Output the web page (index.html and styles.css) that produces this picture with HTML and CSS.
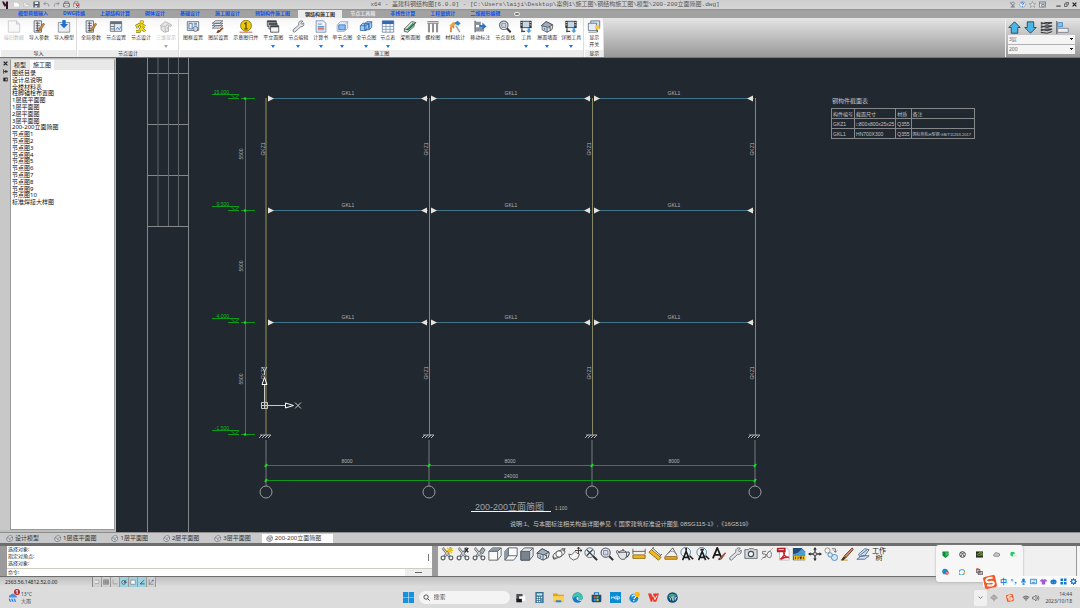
FILE: index.html
```html
<!DOCTYPE html>
<html lang="zh-CN">
<head>
<meta charset="utf-8">
<title>盖建科钢结构图</title>
<link rel="stylesheet" href="styles.css">
</head>
<body>
<svg class="sprite" aria-hidden="true">
  <symbol id="new" viewBox="0 0 16 16"><path d="M1 3h11l3 3v8H1z" fill="#fafafa" stroke="#b4b4b4"/><path d="M12 3v3h3" fill="none" stroke="#b4b4b4"/></symbol>
  <symbol id="open" viewBox="0 0 16 16"><path d="M1 13V4h5l1 2h5v2M1 13l4-5h10l-4 5z" fill="#eee" stroke="#b0b0b0"/></symbol>
  <symbol id="save" viewBox="0 0 16 16"><path d="M1 1h13l1 1v13H1z" fill="#4c5560"/><path d="M4 2h8v5H4zM4 10h8v5H4z" fill="#e6e9ee"/><path d="M9 11h2v3H9z" fill="#4c5560"/></symbol>
  <symbol id="undo" viewBox="0 0 16 16"><path d="M2 6h8q5 1 3 7M6 2L2 6l4 4" fill="none" stroke="#8b9097" stroke-width="2"/></symbol>
  <symbol id="redo" viewBox="0 0 16 16"><path d="M14 6H6q-5 1-3 7M10 2l4 4-4 4" fill="none" stroke="#8b9097" stroke-width="2"/></symbol>
  <symbol id="print" viewBox="0 0 16 16"><path d="M4 6V2h8v4M4 13H1V6h14v7h-3" fill="#eee" stroke="#444" stroke-width="1.5"/><path d="M4 10h8v4H4z" fill="#fff" stroke="#444"/></symbol>
  <symbol id="printx" viewBox="0 0 16 16"><path d="M3 6V2h8v4M3 13H1V6h13v7" fill="#ddd" stroke="#777" stroke-width="1.5"/><path d="M7 8l7 7M14 8l-7 7" stroke="#d2332c" stroke-width="2.5"/></symbol>
  <symbol id="applogo" viewBox="0 0 12 16"><path d="M0 1h4l3 6 1-6h4v15H8V9L6 12 3 8z" fill="#35102f"/></symbol>
  <symbol id="sheet" viewBox="0 0 16 16"><path d="M1 1h10l4 4v10H1z" fill="#f8f8f8" stroke="#c6c6c6"/><path d="M11 1v4h4" fill="#ddd" stroke="#c6c6c6"/></symbol>
  <symbol id="params" viewBox="0 0 16 16"><path d="M2 1h9v14H2z" fill="#ececf0" stroke="#555b66"/><path d="M4 4h5M4 7h5M4 10h5M4 13h5M6 2v12" stroke="#444a55"/><path d="M8 11l5-7 2 1-5 8-3 1z" fill="#d58a34" stroke="#5f4020" stroke-width=".6"/></symbol>
  <symbol id="import" viewBox="0 0 16 16"><path d="M1 3h14v12H1z" fill="#e9edf3" stroke="#7d8794"/><path d="M6 0h4v5h3L8 10 3 5h3z" fill="#1c6fd6"/></symbol>
  <symbol id="window" viewBox="0 0 16 16"><path d="M1 2h14v12H1z" fill="#e1e6ec" stroke="#66707d"/><path d="M1 2h14v3H1z" fill="#66707d"/><path d="M6 5v9M1 8h5M1 11h5" stroke="#66707d"/><path d="M8 12l2-3 2 3 2-4" fill="none" stroke="#3b82d6"/></symbol>
  <symbol id="runner" viewBox="0 0 16 16"><circle cx="9" cy="2.5" r="2.3" fill="#f5dc16" stroke="#5e5608" stroke-width=".5"/><path d="M7 5L3 7l1 3M8 5l1 5 4 4M9 6l4 2M8 10l-2 4H2" fill="none" stroke="#5e5608" stroke-width="3.3"/><path d="M7 5L3 7l1 3M8 5l1 5 4 4M9 6l4 2M8 10l-2 4H2" fill="none" stroke="#f5dc16" stroke-width="2.2"/></symbol>
  <symbol id="housegray" viewBox="0 0 16 16"><path d="M1 7l6-5 8 4-1 2-3-1v7l-5 1-4-3V8z" fill="#e5e5e5" stroke="#aaa"/><path d="M7 8v7M1 7l6 1 4-3M9 10h2v4" fill="none" stroke="#b2b2b2"/></symbol>
  <symbol id="frame" viewBox="0 0 16 16"><path d="M1 2h14v11H1z" fill="#e9eef5" stroke="#606c7c"/><path d="M3 4h4v7H3zM9 4h4M9 6h4" fill="none" stroke="#3d6bb0"/><circle cx="11" cy="11" r="3" fill="#cfd6df" stroke="#53616f"/></symbol>
  <symbol id="layers" viewBox="0 0 16 16"><path d="M1 10l4-3h9l-4 3zM1 7l4-3h9l-4 3zM1 4l4-3h9l-4 3z" fill="#f2f4f7" stroke="#59626e"/><path d="M8 14l5-5 2 1-5 5z" fill="#a24d20"/><path d="M8 12l3 2-3 2H6z" fill="#7c3513"/></symbol>
  <symbol id="coin" viewBox="0 0 16 16"><path d="M0 15h16" stroke="#b14c32"/><circle cx="8" cy="7" r="6.7" fill="#e8c70c" stroke="#806c08"/><path d="M6 5l2-1.5V11M6 11h4" fill="none" stroke="#55480a" stroke-width="1.5"/></symbol>
  <symbol id="stack" viewBox="0 0 16 16"><path d="M1 1h11v7H1z" fill="#e8e8e8" stroke="#3c4248"/><path d="M1 1h11v2H1z" fill="#3c4248"/><path d="M3 4h10v7H3z" fill="#eee" stroke="#3c4248"/><path d="M3 4h10v2H3z" fill="#3c4248"/><path d="M5 7h10v8H5z" fill="#f5f5f5" stroke="#3c4248"/><path d="M5 7h10v2H5z" fill="#3c4248"/></symbol>
  <symbol id="wrench" viewBox="0 0 16 16"><path d="M2 12l7-6q-1-4 3-5l2 .4-2.4 2.6 1.2 1.3L15 3.500q1 5-4 5L4 15q-3 0-2-3z" fill="#e2e4e7" stroke="#666b74"/></symbol>
  <symbol id="doc" viewBox="0 0 16 16"><path d="M2 1h9l3 3v11H2z" fill="#edf3fb" stroke="#6d84a8"/><path d="M4 5h5M4 8h8M4 12h8" stroke="#497fc8"/><path d="M4 10h8" stroke="#d24a3a" stroke-width="1.5"/></symbol>
  <symbol id="cube1" viewBox="0 0 16 16"><path d="M2 6l4-4h9v8l-4 4H2z" fill="#e6edf5" stroke="#9aa7b5"/><path d="M4 6h8v6H4z" fill="#8bbdf2" stroke="#3073c6"/><path d="M11 6l4-4" stroke="#9aa7b5"/></symbol>
  <symbol id="cube2" viewBox="0 0 16 16"><path d="M1 7l3-3h7v6l-3 3H1zM6 5l3-3h6v7l-3 3H6z" fill="#a8cdf5" stroke="#2d68ad"/><path d="M1 7h7v6M8 7l3-3M6 5h6v7M12 5l3-3" fill="none" stroke="#2d68ad"/></symbol>
  <symbol id="table" viewBox="0 0 16 16"><path d="M1 1h14v14H1z" fill="#f8fbff" stroke="#6883a8"/><path d="M1 1h14v4H1z" fill="#2f68b5"/><path d="M1 8h14M1 11.500h14M5.500 5v10M10.500 5v10" stroke="#8296b2"/></symbol>
  <symbol id="beam" viewBox="0 0 16 16"><path d="M1 11l9-9 5 1-2 3v2l-8 7-4-1z" fill="#dfe8e2" stroke="#3e4a43"/><path d="M3 12l9-9 1 3-7 7z" fill="#2d9a58"/><path d="M1 11l5 1 9-9" fill="none" stroke="#3e4a43"/></symbol>
  <symbol id="bolts" viewBox="0 0 16 16"><path d="M1 2h14M1 4h14" stroke="#666"/><path d="M3 4v11M8 4v11M13 4v11" stroke="#707070" stroke-width="2.5"/><path d="M3 4v11M8 4v11M13 4v11" stroke="#e8e8e8" stroke-width=".7"/></symbol>
  <symbol id="stats" viewBox="0 0 16 16"><path d="M1 7l5-5 4 2-5 5z" fill="#eda73f"/><path d="M7 4l4-3 4 3-3 3z" fill="#2d86ce"/><path d="M3 8v7M6 7v3" stroke="#cc7c26" stroke-width="2"/><path d="M9 7l5 8" stroke="#d9dde1" stroke-width="3"/><path d="M9 7l5 8" stroke="#7c8288" stroke-width="1"/></symbol>
  <symbol id="movelabel" viewBox="0 0 16 16"><path d="M2 1v14" stroke="#535a63" stroke-width="1.500"/><path d="M3 2h6v4H3zM3 9h10v5H3z" fill="#8b939d"/><path d="M7 6h4V3l5 5-5 4V9H7z" fill="#2576c7"/></symbol>
  <symbol id="zoomi" viewBox="0 0 16 16"><circle cx="6.500" cy="6.500" r="5.200" fill="#e8eef2" stroke="#68747f" stroke-width="1.500"/><path d="M4 4h5v5H4z" fill="#cfd9df" stroke="#879"/><path d="M10.500 10.500L15 15" stroke="#30353a" stroke-width="2.400"/></symbol>
  <symbol id="film" viewBox="0 0 16 16"><path d="M1 1h14v9H1z" fill="#303941"/><path d="M4 2h8v7H4z" fill="#c6d6e4"/><path d="M1.500 3h2M1.500 6h2M12.500 3h2M12.500 6h2" stroke="#eee"/><path d="M3 10v5M2 14h5" stroke="#444" stroke-width="1.500"/><path d="M10 10h3v3h2l-3.500 3L8 13h2z" fill="#4b9be0"/></symbol>
  <symbol id="house" viewBox="0 0 16 16"><path d="M1 7l6-5 8 4v2l-1 4-6 3-6-3V8z" fill="#dfe4ea" stroke="#454d57"/><path d="M1 7l6-5 8 4-6 3z" fill="#a0acb9" stroke="#454d57"/><path d="M8 9v6M10 10l2-1v4" stroke="#454d57" fill="none"/><path d="M4 9l2 1v3l-2-1z" fill="#4e8fcc"/></symbol>
  <symbol id="display" viewBox="0 0 16 16"><path d="M4 1h11v9H4z" fill="#cfdcec" stroke="#5d6d80"/><path d="M1 4h10v9H1z" fill="#e8edf4" stroke="#5d6d80"/><path d="M1 15h10" stroke="#777"/><circle cx="12" cy="9" r="2.700" fill="#f8ca3f"/><path d="M11 12h2v3h-2z" fill="#77694d"/></symbol>
  <symbol id="up" viewBox="0 0 16 16"><path d="M8 1l7 7h-3v7H4V8H1z" fill="#48b7e8" stroke="#434a50" stroke-width="1.200"/></symbol>
  <symbol id="down" viewBox="0 0 16 16"><path d="M8 15l7-7h-3V1H4v7H1z" fill="#48b7e8" stroke="#434a50" stroke-width="1.200"/></symbol>
  <symbol id="floors" viewBox="0 0 16 16"><path d="M1 2l8 2 6-2M1 6l8 2 6-2M1 10l8 2 6-2M1 14l8 1 6-2M1 4l6-2h8M1 8l6-2h8M1 12l6-2h8" fill="none" stroke="#3b3e42" stroke-width="1.300"/></symbol>
  <symbol id="align" viewBox="0 0 16 16"><path d="M1 0v16" stroke="#303a44"/><path d="M2 2h6v5H2z" fill="#80c2f5" stroke="#4383b7"/><path d="M2 9h13v5H2z" fill="#eceef5" stroke="#777789"/></symbol>
  <symbol id="sat" viewBox="0 0 16 16"><path d="M3 2q0 7 9 8M4 6l6-4 3 4-4 4M8 9v3M4 14h9l-2-2H6z" fill="none" stroke="#65707c" stroke-width="1.500"/></symbol>
  <symbol id="help" viewBox="0 0 16 16"><circle cx="8" cy="8" r="6.500" fill="#e5efff" stroke="#5672a2"/><path d="M5.500 6q0-3 3-2.500t1 3.500L8 9M8 11v2" fill="none" stroke="#2360c2" stroke-width="2"/></symbol>
  <symbol id="star" viewBox="0 0 16 16"><path d="M8 1l2 5h5l-4 3 2 6-5-4-5 4 2-6-4-3h5z" fill="#e8e8e8" stroke="#697078"/></symbol>
  <symbol id="panel" viewBox="0 0 16 16"><path d="M1 2h14v12H1z" fill="#e8edf0" stroke="#5a6570" stroke-width="1.500"/><path d="M1 5h14M6 8h6v4H6z" fill="none" stroke="#5a6570" stroke-width="1.500"/></symbol>
  <symbol id="dwgtab" viewBox="0 0 16 16"><path d="M2 6l5-4h6l2 5-2 6-6 2-5-3z" fill="#f5f5f5" stroke="#59616c" stroke-width="1.500"/><path d="M3 7h9l2-2M6 11h5" fill="none" stroke="#59616c" stroke-width="2"/></symbol>
  <symbol id="cut" viewBox="0 0 16 16"><path d="M3 1l8 10M13 1L5 11" stroke="#737980" stroke-width="2.800"/><path d="M3 1l8 10M13 1L5 11" stroke="#eceeef"/><circle cx="3.500" cy="12.500" r="2.200" fill="none" stroke="#555b61" stroke-width="1.300"/><circle cx="12.500" cy="12.500" r="2.200" fill="none" stroke="#555b61" stroke-width="1.300"/></symbol>
  <symbol id="cutsun" viewBox="0 0 16 16"><use href="#cut"/><path d="M11 0v8M7 4h8M8 1l6 6M14 1L8 7" stroke="#f3c10d" stroke-width="1.300"/></symbol>
  <symbol id="cutdark" viewBox="0 0 16 16"><use href="#cut"/><path d="M10 1l4 5M14 1l-4 5" stroke="#282c30" stroke-width="1.500"/></symbol>
  <symbol id="cutgray" viewBox="0 0 16 16"><use href="#cut"/><path d="M9 5l3-4 3 2-3 5z" fill="#a8adb2" stroke="#666"/></symbol>
  <symbol id="boxtop" viewBox="0 0 16 16"><path d="M1 5l4-4h10v9l-4 5H1z" fill="#fafafa" stroke="#555d66"/><path d="M1 5l4-4h10l-4 4z" fill="#8d98a5"/><path d="M1 5h10v10M11 5l4-4" fill="none" stroke="#555d66"/></symbol>
  <symbol id="boxleft" viewBox="0 0 16 16"><path d="M1 5l4-4h10v9l-4 5H1z" fill="#fafafa" stroke="#555d66"/><path d="M1 5l4-4v9l-4 5z" fill="#8d98a5"/><path d="M5 1v9h10M5 10l-4 5" fill="none" stroke="#555d66"/></symbol>
  <symbol id="boxfront" viewBox="0 0 16 16"><path d="M1 5l4-4h10v9l-4 5H1z" fill="#e4e8ec" stroke="#4e5761"/><path d="M1 5h10v10H1z" fill="#79848f" stroke="#4e5761"/><path d="M11 5l4-4" stroke="#4e5761"/></symbol>
  <symbol id="orbit" viewBox="0 0 16 16"><ellipse cx="8" cy="8" rx="7.500" ry="3.500" transform="rotate(-28 8 8)" fill="#f2f2f2" stroke="#555"/><circle cx="8" cy="8" r="3.600" fill="#fff" stroke="#555"/><path d="M11 2l4 0-2 3M1 11l1 3 3-1" fill="none" stroke="#444"/></symbol>
  <symbol id="pan" viewBox="0 0 16 16"><path d="M1 8l3 1 4-4 2 2 3 1-2 5-5 2-4-3z" fill="#f6f6f6" stroke="#555"/><path d="M12 0v8M8 4h8M10.500 2L12 0l1.500 2M14 2.500L16 4l-2 1.500" fill="none" stroke="#333"/></symbol>
  <symbol id="zoomx" viewBox="0 0 16 16"><circle cx="6.500" cy="6.500" r="5.500" fill="#eef2f4" stroke="#56616b"/><path d="M3 3l7 7M10 3l-7 7" stroke="#37414a" stroke-width="1.500"/><path d="M10.500 10.500L15 15" stroke="#30353a" stroke-width="2.400"/></symbol>
  <symbol id="teapot" viewBox="0 0 16 16"><path d="M12 6q4-1 3 2t-4 4" fill="none" stroke="#4d5156" stroke-width="1.200"/><path d="M3 6Q8 2 12 6q1 5-2 8H6Q3 12 3 10L0 5l2-1 2 3z" fill="#e5e5e5" stroke="#4d5156"/><path d="M3 6h9M7 3h2" stroke="#4d5156"/></symbol>
  <symbol id="dimlin" viewBox="0 0 16 16"><path d="M1 2v6M15 2v6M1 5h14" stroke="#555"/><path d="M1 9h14v4H1z" fill="#f3b81d" stroke="#8a6919"/></symbol>
  <symbol id="dimrot" viewBox="0 0 16 16"><path d="M1 6l3-3 11 9-3 3z" fill="#f3b81d" stroke="#8a6919"/><path d="M5 1l10 9M7 0L4 3M16 8l-3 3" stroke="#555"/></symbol>
  <symbol id="dimang" viewBox="0 0 16 16"><path d="M2 10L10 1l5 9" fill="none" stroke="#555"/><path d="M5 7q5-5 9 1" fill="none" stroke="#888"/><path d="M1 11h14v3H1z" fill="#f3a71d" stroke="#8a6919"/></symbol>
  <symbol id="zoomA" viewBox="0 0 16 16"><circle cx="6.500" cy="6" r="5.500" fill="#eef4f7" stroke="#4a8093"/><path d="M3 15L7 5l4 10M4 12h6" fill="none" stroke="#16191c" stroke-width="1.800"/><path d="M7 1v3M11 10l4 4" stroke="#222" stroke-width="2"/></symbol>
  <symbol id="zoomAm" viewBox="0 0 16 16"><circle cx="6.500" cy="6" r="5.500" fill="#eef4f7" stroke="#4a8093"/><path d="M3 15L7 5l4 10M4 12h6" fill="none" stroke="#16191c" stroke-width="1.800"/><path d="M5 3h4M11 10l4 4" stroke="#222" stroke-width="2"/></symbol>
  <symbol id="Abrush" viewBox="0 0 16 16"><path d="M1 13L6 1l5 12M3 9h6" fill="none" stroke="#17191c" stroke-width="2"/><path d="M9 12l6-6 1 1-5 7z" fill="#a44a27"/><path d="M8 12l3 2-4 1z" fill="#5c2816"/></symbol>
  <symbol id="camera" viewBox="0 0 16 16"><path d="M1 3h4l1-1h5l1 1h3v10H1z" fill="#d8dadd" stroke="#5e646b"/><circle cx="8" cy="8" r="3" fill="#f8f8f8" stroke="#454c53" stroke-width="1.300"/></symbol>
  <symbol id="fifty" viewBox="0 0 16 16"><path d="M1 15L15 1" stroke="#a5a5a5"/><path d="M7 5H3v3q4-1 4 2t-4 2M10 5q3-1 3 3.500t-3 3.500-2-3.500 2-3.500" fill="none" stroke="#6c6c6c"/></symbol>
  <symbol id="pdf" viewBox="0 0 16 16"><path d="M4 1h8l3 3v11H4z" fill="#fff" stroke="#bbb"/><path d="M1 1h10v5H1z" fill="#bd1c24"/><path d="M3 3h6" stroke="#fff"/><path d="M5 14q6-5 4-8-1 5 6 6-4-1-10 2z" fill="none" stroke="#cb242c" stroke-width="1.800"/></symbol>
  <symbol id="dwg" viewBox="0 0 16 16"><path d="M1 1h10l4 4v10H1z" fill="#234b7a"/><path d="M1 8q6 0 10-6l4 3v5H1z" fill="#4c9bd1"/><path d="M2 10h13v5H2z" fill="#f5bf13"/><path d="M4 11v3M7 11v3M9 11l1 3 1-3M13 11v3" stroke="#54420d"/></symbol>
  <symbol id="cross" viewBox="0 0 16 16"><path d="M8 1v5M8 10v5M1 8h5M10 8h5" stroke="#333" stroke-width="1.500"/><path d="M6 3l2-3 2 3zM6 13l2 3 2-3zM3 6L0 8l3 2zM13 6l3 2-3 2z" fill="#333"/><path d="M6.500 6.500h3v3h-3z" fill="#fff" stroke="#333"/></symbol>
  <symbol id="link" viewBox="0 0 16 16"><circle cx="4" cy="4" r="3" fill="#f4f4f4" stroke="#888"/><circle cx="12" cy="12" r="3.500" fill="#d0e8fb" stroke="#4b86b7"/><circle cx="7" cy="9" r="2.500" fill="#e4f0fa" stroke="#4b86b7"/><path d="M9 2h4v4M11 4l2 2 2-2" fill="none" stroke="#6a6f75"/></symbol>
  <symbol id="brush" viewBox="0 0 16 16"><path d="M1 15h8M3 14l2-4 2 2z" fill="#f1ce2c" stroke="#b9982b"/><path d="M5 10L14 1l1 2-8 9z" fill="#d0895c" stroke="#673927"/><path d="M4 11l3 1-3 3-3 0z" fill="#44302a"/></symbol>
  <symbol id="erase" viewBox="0 0 16 16"><path d="M1 14h9l5-4H6zM3 8l7-6 5 1-5 7-6 1z" fill="#cce0f2" stroke="#526b86"/><path d="M5 9l8-6" stroke="#526b86"/></symbol>
  <symbol id="magnify" viewBox="0 0 16 16"><circle cx="7" cy="7" r="5" fill="none" stroke="#333" stroke-width="1.800"/><path d="M11 11l4 4" stroke="#333" stroke-width="2"/></symbol>
  <symbol id="win" viewBox="0 0 16 16"><path d="M0 0h7.500v7.500H0zM8.500 0H16v7.500H8.500zM0 8.500h7.500V16H0zM8.500 8.500H16V16H8.500z" fill="#1492df"/></symbol>
  <symbol id="tasks" viewBox="0 0 16 16"><path d="M6 5h9v8H6z" fill="#fafafa"/><path d="M2 3h9v3H6v6H2z" fill="#4a4d52"/><path d="M2 10h8v5H2z" fill="#17191b"/></symbol>
  <symbol id="calc" viewBox="0 0 16 16"><path d="M2 0h12v16H2z" fill="#346e91"/><path d="M4 2h8v3H4z" fill="#c4e9fb"/><path d="M4 7h2v2H4zM7 7h2v2H7zM10 7h2v2h-2zM4 10h2v2H4zM7 10h2v2H7zM4 13h2v2H4zM7 13h2v2H7z" fill="#eee"/><path d="M10 10h2v5h-2z" fill="#35b3ed"/></symbol>
  <symbol id="folder" viewBox="0 0 16 16"><path d="M0 2h6l2 2h8v10H0z" fill="#e5a31b"/><path d="M0 6h16v8H0z" fill="#ffd24b"/><path d="M4 12h8v3H4z" fill="#3282ca"/></symbol>
  <symbol id="edge" viewBox="0 0 16 16"><circle cx="8" cy="8" r="7.500" fill="#1678cb"/><path d="M1 6Q5-2 12 2q5 4 3 8-3 3-6 1 3-4-1-5-4 0-7 4z" fill="#3fc7a2"/><path d="M7 7q-2 6 6 6 1 0 2-2-5 2-6 0 2-4-2-4z" fill="#dff2fb"/></symbol>
  <symbol id="store" viewBox="0 0 16 16"><path d="M5 4V1h6v3" fill="none" stroke="#187aba" stroke-width="1.500"/><path d="M1 4h14v9q0 2-2 2H3q-2 0-2-2z" fill="#184f7e"/><path d="M4 6h3v3H4z" fill="#ef4d32"/><path d="M8 6h3v3H8z" fill="#7fba00"/><path d="M4 10h3v3H4z" fill="#20a8ec"/><path d="M8 10h3v3H8z" fill="#fdb913"/></symbol>
  <symbol id="mdp" viewBox="0 0 16 16"><path d="M0 0h16v16H0z" fill="#0b8bd4"/><path d="M2 10V7l2 1 2-1v3M9 7H7v3h3V5M11 12V7h3v3h-3" fill="none" stroke="#fff"/></symbol>
  <symbol id="helpball" viewBox="0 0 16 16"><circle cx="7" cy="9" r="6.500" fill="#168bd0"/><path d="M4.500 7q0-3 3-2.500t2 3L7 10M7 11.500v2" fill="none" stroke="#fff" stroke-width="1.700"/><circle cx="12" cy="3.500" r="3.800" fill="#fdb917"/></symbol>
  <symbol id="wps" viewBox="0 0 16 16"><path d="M0 2h5l1 6 2-6h8l-4 12H8L7 10l-1 4H4z" fill="#ed3528"/><path d="M8 5l2 6 3-6" fill="none" stroke="#fff" stroke-width="1.300"/></symbol>
  <symbol id="ydk" viewBox="0 0 16 16"><circle cx="8" cy="8" r="7.700" fill="#144c78"/><path d="M2 5q5-5 12 0-3 3-5 1-3 3-7-1z" fill="#40a681"/><path d="M3 7l2 3 2-3M5 10v2M8 7v5h2V7zM12 7v5M15 7l-3 3" fill="none" stroke="#dff3ee"/></symbol>
  <symbol id="weather" viewBox="0 0 16 16"><path d="M2 8q-2-3 2-4 4-5 7 0 4 0 3 4z" fill="#4a8ee8"/><path d="M2 10l2 5M6 10l2 5M10 10l2 5" stroke="#207cf0" stroke-width="2"/></symbol>
  <symbol id="shield" viewBox="0 0 16 16"><path d="M1 1h14v9l-7 6-7-6z" fill="#15863a"/><path d="M8 3h5v6l-5 4z" fill="#35cf57"/></symbol>
  <symbol id="xbox" viewBox="0 0 16 16"><circle cx="8" cy="8" r="6.500" fill="#eee" stroke="#30343a" stroke-width="2"/><path d="M4 13q1-5 4-6 3 1 4 6M4 3l4 4 4-4" fill="none" stroke="#30343a" stroke-width="1.800"/></symbol>
  <symbol id="nvidia" viewBox="0 0 16 16"><path d="M0 1h16v14H0z" fill="#282d22"/><path d="M2 8q5-6 11 0-6 5-11 0zM7 4h7v8" fill="none" stroke="#83bf29" stroke-width="1.800"/></symbol>
  <symbol id="cloud" viewBox="0 0 16 16"><path d="M3 12q-4-2 0-5 2-6 8-2 6 0 4 5-1 3-4 2z" fill="#c7c9cc" stroke="#555" stroke-width="1.300"/></symbol>
  <symbol id="wechat" viewBox="0 0 16 16"><circle cx="6" cy="7" r="5.500" fill="#25c968"/><circle cx="11" cy="10" r="4.500" fill="#ddeee5"/></symbol>
  <symbol id="bluex" viewBox="0 0 16 16"><circle cx="7" cy="8" r="6.500" fill="#168dcf"/><circle cx="11" cy="11" r="4.500" fill="#dd3f43"/><path d="M9 9l4 4M13 9l-4 4" stroke="#fff"/></symbol>
  <symbol id="swirl" viewBox="0 0 16 16"><path d="M11 13A6 6 0 113 5" fill="none" stroke="#299ee8" stroke-width="2.500"/><path d="M3 5A6 6 0 0113 10" fill="none" stroke="#50b6b1" stroke-width="2.500"/><circle cx="12" cy="12" r="2.500" fill="#f4ad22"/></symbol>
  <symbol id="device" viewBox="0 0 16 16"><path d="M1 3h8v8H1zM5 8h10v7H5z" fill="#bcb6b6" stroke="#4d4646" stroke-width="1.500"/><path d="M1 2h5" stroke="#d8382d" stroke-width="2.500"/></symbol>
  <symbol id="sogou" viewBox="0 0 16 16"><g transform="rotate(-12 8 8)"><rect x="1" y="1" width="14" height="14" rx="2" fill="#f05a28"/><path d="M12 4Q4 2 4 6q0 2 4 2t4 2q0 4-8 1" fill="none" stroke="#fff" stroke-width="2.200"/></g></symbol>
  <symbol id="punct" viewBox="0 0 16 16"><circle cx="5" cy="5" r="2" fill="none" stroke="#1677d2" stroke-width="1.500"/><path d="M11 10h3q0 3-3 5" fill="none" stroke="#1677d2" stroke-width="2"/></symbol>
  <symbol id="mic" viewBox="0 0 16 16"><rect x="5" y="1" width="6" height="9" rx="3" fill="currentColor"/><path d="M3 7q0 5 5 5t5-5M8 12v3M5 15h6" fill="none" stroke="currentColor" stroke-width="1.500"/></symbol>
  <symbol id="keyb" viewBox="0 0 16 16"><path d="M1 3h14v10H1zM4 6h1M7 6h1M10 6h2M4 10h8" fill="none" stroke="#1677d2" stroke-width="1.800"/></symbol>
  <symbol id="shirt" viewBox="0 0 16 16"><path d="M5 2l3 2 3-2 5 3-2 4-2-1v7H4V8L2 9 0 5z" fill="#a35bd3"/></symbol>
  <symbol id="robot" viewBox="0 0 16 16"><ellipse cx="8" cy="9" rx="7" ry="5.500" fill="#1677d2"/><path d="M8 1v3M5 9v1M11 9v1" stroke="#fff" stroke-width="2"/><path d="M8 1v4" stroke="#1677d2"/></symbol>
  <symbol id="apps" viewBox="0 0 16 16"><path d="M1 1h6v6H1zM9 1h6v6H9zM1 9h6v6H1zM9 9h6v6H9z" fill="#1677d2"/></symbol>
  <symbol id="gear" viewBox="0 0 16 16"><circle cx="8" cy="8" r="4.500" fill="none" stroke="#1677d2" stroke-width="3"/><path d="M8 0v4M8 12v4M0 8h4M12 8h4M2 2l3 3M11 11l3 3M14 2l-3 3M2 14l3-3" stroke="#1677d2" stroke-width="2"/></symbol>
  <symbol id="inputmic" viewBox="0 0 16 16"><path d="M4 4h8v6H4zM8 1v14M2 6v3M14 6v3" fill="none" stroke="#888" stroke-width="1.600"/></symbol>
  <symbol id="wifi" viewBox="0 0 16 16"><path d="M1 6q7-6 14 0l-7 8z" fill="#777"/><path d="M3 8q5-4 10 0M5 11q3-2 6 0" fill="none" stroke="#ddd"/></symbol>
  <symbol id="sound" viewBox="0 0 16 16"><path d="M1 6h3l4-4v12l-4-4H1zM10 5q3 3 0 6M12 3q4 5 0 10" fill="none" stroke="#555" stroke-width="1.300"/></symbol>
  <symbol id="chev" viewBox="0 0 16 16"><path d="M2 5l6 6 6-6" fill="none" stroke="#333" stroke-width="2"/></symbol>
  <symbol id="grid" viewBox="0 0 16 16"><path d="M1 2h14v12H1z" fill="#bbb" stroke="#555"/><path d="M1 6h14M1 10h14M6 2v12M11 2v12" stroke="#555"/></symbol>
  <symbol id="snap" viewBox="0 0 16 16"><path d="M3 3h9q3 4 0 9H3" fill="#e8e8e8" stroke="#888" stroke-width="1.500"/></symbol>
  <symbol id="ortho" viewBox="0 0 16 16"><path d="M3 1v12h12" fill="none" stroke="#888" stroke-width="1.500"/></symbol>
  <symbol id="polar" viewBox="0 0 16 16"><circle cx="7" cy="9" r="5" fill="#d4eef5" stroke="#345" stroke-width="2"/><path d="M7 9l7-6M7 9h8" stroke="#345" stroke-width="2"/></symbol>
  <symbol id="osnap" viewBox="0 0 16 16"><path d="M2 3h12v11H2z" fill="#fff" stroke="#667" stroke-width="1.500"/><path d="M1 1h4v4H1z" fill="#d79a80"/></symbol>
  <symbol id="otrack" viewBox="0 0 16 16"><path d="M14 3L3 13h12" fill="none" stroke="#345" stroke-width="2"/></symbol>
  <symbol id="ducs" viewBox="0 0 16 16"><path d="M3 1v13h12M3 14L13 4" fill="none" stroke="#666" stroke-width="1.500"/><path d="M13 1v6M10 4h6" stroke="#36c" stroke-width="1.500"/></symbol>

  <symbol id="level" viewBox="0 0 44 8" overflow="visible"><path d="M0 1h27M16 5h11M29 5h14M19 1l4 4 4-4" fill="none" stroke="#0d9a1b"/><circle cx="33" cy="5" r="1.200" fill="#10e020"/></symbol>
  <symbol id="member" viewBox="0 0 164 6" overflow="visible"><path d="M2 3h160" stroke="#40748a"/><path d="M2 0l6 3-6 3zM161 0l-6 3 6 3z" fill="#e6e2dc"/></symbol>
  <symbol id="axis" viewBox="0 0 14 66" overflow="visible"><path d="M7 7v46" stroke="#777a7e"/><circle cx="7" cy="59" r="6" fill="none" stroke="#9a9c9f"/><path d="M1 2h11M0 5l3-3M3 5l3-3M6 5l3-3M9 5l3-3" stroke="#b2b2b2"/></symbol>
</svg>

<div class="app">
  <header class="titlebar">
    <nav class="quick" aria-label="快速访问">
      <svg class="logo"><use href="#applogo"/></svg>
      <button aria-label="新建"><svg><use href="#new"/></svg></button>
      <button aria-label="打开"><svg><use href="#open"/></svg></button>
      <button aria-label="保存"><svg><use href="#save"/></svg></button>
      <button aria-label="撤销"><svg><use href="#undo"/></svg></button>
      <button aria-label="重做"><svg><use href="#redo"/></svg></button>
      <button aria-label="打印"><svg><use href="#print"/></svg></button>
      <button aria-label="取消打印"><svg><use href="#printx"/></svg></button>
    </nav>
    <h1 class="title">x64 - 盖建科钢结构图[6.0.0] - [C:\Users\laiji\Desktop\案例1\施工图\钢结构施工图\模型\200-200立面简图.dwg]</h1>
    <div class="sys">
      <button aria-label="通讯"><svg><use href="#sat"/></svg></button>
      <button aria-label="帮助"><svg><use href="#help"/></svg></button>
      <button aria-label="收藏"><svg><use href="#star"/></svg></button>
      <button aria-label="面板"><svg><use href="#panel"/></svg></button>
      <button class="winbtn first" aria-label="最小化"><svg viewBox="0 0 16 16"><path d="M1 13h14" stroke="#222" stroke-width="3"/></svg></button>
      <button class="winbtn" aria-label="还原"><svg viewBox="0 0 16 16"><path d="M5 2h10v8M1 6h9v8H1z" fill="none" stroke="#222" stroke-width="2"/></svg></button>
      <button class="winbtn" aria-label="关闭"><svg viewBox="0 0 16 16"><path d="M2 2l12 12M14 2L2 14" stroke="#222" stroke-width="4"/></svg></button>
    </div>
  </header>

  <nav class="tabs" aria-label="功能区">
    <button>模型荷载输入</button><button>DWG转换</button><button>上部结构计算</button><button>砌体设计</button><button>基础设计</button><button>施工图设计</button><button>预制构件施工图</button><button class="on">钢结构施工图</button><button class="pale">节点工具箱</button><button>非线性计算</button><button>工程量统计</button><button>二维图形编辑</button><button class="pill" aria-label="最小化功能区"></button>
  </nav>

  <section class="ribbon">
    <div class="group">
      <div class="tools">
        <button class="tool off"><svg><use href="#sheet"/></svg>接旧数据</button>
        <button class="tool"><svg><use href="#params"/></svg>导入参数</button>
        <button class="tool"><svg><use href="#import"/></svg>导入模型</button>
      </div>
      <p>导入</p>
    </div>
    <div class="group">
      <div class="tools">
        <button class="tool"><svg><use href="#params"/></svg>全局参数</button>
        <button class="tool"><svg><use href="#window"/></svg>节点设置</button>
        <button class="tool"><svg><use href="#runner"/></svg>节点设计</button>
        <button class="tool off more"><svg><use href="#housegray"/></svg>三维显示</button>
      </div>
      <p>节点设计</p>
    </div>
    <div class="group">
      <div class="tools">
        <button class="tool"><svg><use href="#frame"/></svg>图框设置</button>
        <button class="tool"><svg><use href="#layers"/></svg>图层设置</button>
        <button class="tool"><svg><use href="#coin"/></svg>示意图归并</button>
        <button class="tool more"><svg><use href="#stack"/></svg>平立面图</button>
        <button class="tool more"><svg><use href="#wrench"/></svg>节点编辑</button>
        <button class="tool more"><svg><use href="#doc"/></svg>计算书</button>
        <button class="tool slim more"><svg><use href="#cube1"/></svg>单节点图</button>
        <button class="tool slim more"><svg><use href="#cube2"/></svg>全节点图</button>
        <button class="tool slim more"><svg><use href="#table"/></svg>节点表</button>
        <button class="tool"><svg><use href="#beam"/></svg>梁断面图</button>
        <button class="tool"><svg><use href="#bolts"/></svg>螺栓图</button>
        <button class="tool"><svg><use href="#stats"/></svg>材料统计</button>
        <button class="tool"><svg><use href="#movelabel"/></svg>移动标注</button>
        <button class="tool"><svg><use href="#zoomi"/></svg>节点查找</button>
        <button class="tool slim more"><svg><use href="#film"/></svg>工具</button>
        <button class="tool slim more"><svg><use href="#house"/></svg>屋面墙面</button>
        <button class="tool slim more"><svg><use href="#film"/></svg>详图工具</button>
      </div>
      <p>施工图</p>
    </div>
    <div class="group">
      <div class="tools">
        <button class="tool slim"><svg><use href="#display"/></svg>显示<br>开关</button>
      </div>
      <p>显示</p>
    </div>
    <div class="floor">
      <div class="floor-icons">
        <button aria-label="上一层"><svg><use href="#up"/></svg></button>
        <button aria-label="下一层"><svg><use href="#down"/></svg></button>
        <button aria-label="楼层"><svg><use href="#floors"/></svg></button>
        <button aria-label="对齐"><svg><use href="#align"/></svg></button>
      </div>
      <select aria-label="楼层选择"><option>3层</option></select>
      <select aria-label="立面选择"><option>200</option></select>
    </div>
  </section>

  <main class="work">
    <aside class="side">
      <div class="rail">
        <button aria-label="关闭面板"><svg viewBox="0 0 16 16"><path d="M2 2l12 12M14 2L2 14" stroke="#222" stroke-width="4"/></svg></button>
        <button aria-label="固定面板"><svg viewBox="0 0 16 16"><path d="M2 1v14M3 8h12M8 4v8M12 4v8" stroke="#222" stroke-width="2.500"/></svg></button>
        <button aria-label="面板选项"><svg viewBox="0 0 16 16"><path d="M1 2h14v12H1z" fill="#222"/><path d="M8 5h5v6H8z" fill="#bbb"/></svg></button>
      </div>
      <div class="tree">
        <div class="tree-tabs"><button>模型</button><button class="on">施工图</button></div>
        <ul>
          <li>图纸目录</li><li>设计总说明</li><li>全楼材料表</li><li>柱脚锚栓布置图</li><li>1层底平面图</li><li>1层平面图</li><li>2层平面图</li><li>3层平面图</li><li>200-200立面简图</li><li>节点图1</li><li>节点图2</li><li>节点图3</li><li>节点图4</li><li>节点图5</li><li>节点图6</li><li>节点图7</li><li>节点图8</li><li>节点图9</li><li>节点图10</li><li>标准焊接大样图</li>
        </ul>
      </div>
    </aside>

    <svg class="drawing" viewBox="116 58 964 474" preserveAspectRatio="xMidYMid meet" role="img" aria-label="200-200立面简图">
      <path class="sheetline" d="M147.500 58V532M188.500 58V532M147.500 73.500h41M147.500 124.500h41M147.500 175.500h41M147.500 226.500h41"/>
      <path class="sheetline dim" d="M158 58V226M168.500 58V226M178.500 58V226"/>

      <path d="M245.500 98V435" stroke="#0d9a1b"/>
      <use href="#level" x="212" y="93.500" width="44" height="8"/>
      <use href="#level" x="212" y="205.500" width="44" height="8"/>
      <use href="#level" x="212" y="317.500" width="44" height="8"/>
      <use href="#level" x="212" y="429.500" width="44" height="8"/>
      <g class="lv"><text x="229" y="94">15.000</text><text x="229" y="206">9.500</text><text x="229" y="318">4.000</text><text x="229" y="430">-1.500</text></g>

      <path d="M266 98V435" stroke="#5c5f42" stroke-width="2"/>
      <path d="M429.500 98V435M592.500 98V435M755.500 98V435" stroke="#888866"/>

      <use href="#member" x="266" y="95.500" width="164" height="6"/><use href="#member" x="429" y="95.500" width="164" height="6"/><use href="#member" x="592" y="95.500" width="164" height="6"/>
      <use href="#member" x="266" y="207.500" width="164" height="6"/><use href="#member" x="429" y="207.500" width="164" height="6"/><use href="#member" x="592" y="207.500" width="164" height="6"/>
      <use href="#member" x="266" y="319.500" width="164" height="6"/><use href="#member" x="429" y="319.500" width="164" height="6"/><use href="#member" x="592" y="319.500" width="164" height="6"/>

      <g class="tag">
        <text x="348" y="95">GKL1</text><text x="511" y="95">GKL1</text><text x="674" y="95">GKL1</text>
        <text x="348" y="207">GKL1</text><text x="511" y="207">GKL1</text><text x="674" y="207">GKL1</text>
        <text x="348" y="319">GKL1</text><text x="511" y="319">GKL1</text><text x="674" y="319">GKL1</text>
        <text transform="translate(265 149) rotate(-90)">GKZ1</text><text transform="translate(428 149) rotate(-90)">GKZ1</text><text transform="translate(591 149) rotate(-90)">GKZ1</text><text transform="translate(754 149) rotate(-90)">GKZ1</text>
        <text transform="translate(265 373) rotate(-90)">GKZ1</text><text transform="translate(428 373) rotate(-90)">GKZ1</text><text transform="translate(591 373) rotate(-90)">GKZ1</text><text transform="translate(754 373) rotate(-90)">GKZ1</text>
        <text transform="translate(243 154) rotate(-90)">5500</text><text transform="translate(243 266) rotate(-90)">5500</text><text transform="translate(243 379) rotate(-90)">5500</text>
        <text x="347" y="463">8000</text><text x="510" y="463">8000</text><text x="674" y="463">8000</text><text x="511" y="478">24000</text>
        <text x="561" y="510">1:100</text>
      </g>

      <use href="#axis" x="259" y="433" width="14" height="66"/><use href="#axis" x="422" y="433" width="14" height="66"/><use href="#axis" x="585" y="433" width="14" height="66"/><use href="#axis" x="748" y="433" width="14" height="66"/>
      <path d="M266 465.500H755M266 480.500H755" stroke="#0d9a1b"/>
      <path d="M265 467l2-3M428 467l2-3M591 467l2-3M754 467l2-3M265 482l2-3M754 482l2-3" stroke="#10e020" stroke-width="2"/>

      <g fill="none" stroke="#c8c8c8">
        <path d="M261.500 402.500h6v6h-6zM261.500 405.500H286M264.500 408V385"/>
        <path d="M285.500 403v5l8-2.500zM262 384.500h5l-2.500-7z" stroke="#fff"/>
        <path d="M295 402.500l6 6M301 402.500l-6 6M262 367l2.500 4 2.500-4M264.500 371v4"/>
      </g>

      <text class="name" x="475" y="510">200-200立面简图</text>
      <path d="M471 511.500h80" stroke="#f4f4f4"/>
      <text class="note" x="510" y="526">说明:1、与本图标注相关构造详图参见《 国家建筑标准设计图集 08SG115-1》,《16G519》</text>

      <foreignObject x="831" y="97" width="160" height="48">
        <table class="sections">
          <caption>钢构件截面表</caption>
          <tr><th>构件编号</th><th>截面尺寸</th><th>材质</th><th>备注</th></tr>
          <tr><td>GKZ1</td><td>□800x800x25x25</td><td>Q355</td><td></td></tr>
          <tr><td>GKL1</td><td>HN700X300</td><td>Q355</td><td class="remark">国标热轧H型钢 GB/T11263-2017</td></tr>
        </table>
      </foreignObject>
    </svg>
  </main>

  <nav class="files" aria-label="图纸">
    <button><svg><use href="#dwgtab"/></svg>设计模型</button><button><svg><use href="#dwgtab"/></svg>1层底平面图</button><button><svg><use href="#dwgtab"/></svg>1层平面图</button><button><svg><use href="#dwgtab"/></svg>2层平面图</button><button><svg><use href="#dwgtab"/></svg>3层平面图</button><button class="on"><svg><use href="#dwgtab"/></svg>200-200立面简图</button>
  </nav>

  <section class="dock">
    <div class="command">
      <div class="history"><p>选择对象:</p><p>指定对角点:</p><p>选择对象:</p></div>
      <div class="prompt"><label for="cmd">命令:</label><input id="cmd" type="text"><i></i></div>
    </div>
    <div class="toolbar">
      <button aria-label="剪切一"><svg><use href="#cutsun"/></svg></button><button aria-label="剪切二"><svg><use href="#cutdark"/></svg></button><button aria-label="剪切三"><svg><use href="#cutgray"/></svg></button><button aria-label="俯视"><svg><use href="#boxtop"/></svg></button><button aria-label="左视"><svg><use href="#boxleft"/></svg></button><button aria-label="前视"><svg><use href="#boxfront"/></svg></button><button aria-label="轴测"><svg><use href="#house"/></svg></button><button aria-label="动态观察"><svg><use href="#orbit"/></svg></button><button aria-label="平移"><svg><use href="#pan"/></svg></button><button aria-label="全部缩放"><svg><use href="#zoomx"/></svg></button><button aria-label="窗口缩放"><svg><use href="#zoomi"/></svg></button><button aria-label="渲染"><svg><use href="#teapot"/></svg></button><button aria-label="线性标注"><svg><use href="#dimlin"/></svg></button><button aria-label="对齐标注"><svg><use href="#dimrot"/></svg></button><button aria-label="角度标注"><svg><use href="#dimang"/></svg></button><button aria-label="文字放大"><svg><use href="#zoomA"/></svg></button><button aria-label="文字缩小"><svg><use href="#zoomAm"/></svg></button><button aria-label="文字样式"><svg><use href="#Abrush"/></svg></button><button aria-label="设置"><svg><use href="#wrench"/></svg></button><button aria-label="截图"><svg><use href="#camera"/></svg></button><button aria-label="比例"><svg><use href="#fifty"/></svg></button><button aria-label="PDF"><svg><use href="#pdf"/></svg></button><button aria-label="DWG"><svg><use href="#dwg"/></svg></button><button aria-label="移动"><svg><use href="#cross"/></svg></button><button aria-label="关联"><svg><use href="#link"/></svg></button><button aria-label="格式刷"><svg><use href="#brush"/></svg></button><button aria-label="清理"><svg><use href="#erase"/></svg></button><button class="word">工作<br>树</button>
    </div>
    <div class="dock-end"></div>
  </section>

  <footer class="status">
    <span>2363.56,14812.52,0.00</span>
    <div class="modes">
      <button aria-label="捕捉"><svg><use href="#snap"/></svg></button><button aria-label="栅格"><svg><use href="#grid"/></svg></button><button aria-label="正交"><svg><use href="#ortho"/></svg></button><button class="on" aria-label="极轴"><svg><use href="#polar"/></svg></button><button class="on" aria-label="对象捕捉"><svg><use href="#osnap"/></svg></button><button class="on" aria-label="对象追踪"><svg><use href="#otrack"/></svg></button><button aria-label="动态坐标"><svg><use href="#ducs"/></svg></button>
    </div>
  </footer>

  <nav class="taskbar" aria-label="任务栏">
    <div class="weather"><span class="wicon"><svg><use href="#weather"/></svg><b>1</b></span><span class="wtext"><span>13°C</span><span>大雨</span></span></div>
    <div class="apps">
      <button class="start" aria-label="开始"><svg><use href="#win"/></svg></button>
      <label class="search"><svg><use href="#magnify"/></svg><input type="text" placeholder="搜索" aria-label="搜索"></label>
      <button aria-label="任务视图"><svg><use href="#tasks"/></svg></button><button aria-label="计算器"><svg><use href="#calc"/></svg></button><button aria-label="文件"><svg><use href="#folder"/></svg></button><button aria-label="浏览器"><svg><use href="#edge"/></svg></button><button aria-label="商店"><svg><use href="#store"/></svg></button><button aria-label="mdp"><svg><use href="#mdp"/></svg></button><button aria-label="帮助"><svg><use href="#helpball"/></svg></button><button aria-label="WPS"><svg><use href="#wps"/></svg></button><button aria-label="YJK"><svg><use href="#ydk"/></svg></button>
    </div>
    <div class="tray">
      <button class="expand" aria-label="展开托盘"><svg><use href="#chev"/></svg></button>
      <svg><use href="#inputmic"/></svg>
      <svg><use href="#sogou"/></svg>
      <span class="net"><svg><use href="#wifi"/></svg><svg><use href="#sound"/></svg></span>
      <time><span>14:44</span><span>2023/10/18</span></time>
    </div>
  </nav>

  <div class="popup">
    <svg><use href="#shield"/></svg><svg><use href="#xbox"/></svg><svg><use href="#nvidia"/></svg><svg><use href="#cloud"/></svg><svg><use href="#wechat"/></svg><svg><use href="#bluex"/></svg><svg><use href="#swirl"/></svg><svg><use href="#device"/></svg>
  </div>
  <div class="ime">
    <svg class="big"><use href="#sogou"/></svg><b>中</b><svg><use href="#punct"/></svg><svg><use href="#mic"/></svg><svg><use href="#keyb"/></svg><svg><use href="#shirt"/></svg><svg><use href="#robot"/></svg><svg><use href="#apps"/></svg><svg><use href="#gear"/></svg>
  </div>
</div>
</body>
</html>
```

FILE: styles.css
```css
* { box-sizing: border-box; margin: 0; padding: 0; }
body { font: 6px/7px "Noto Sans", "Noto Sans CJK SC", sans-serif; color: #333; background: #d9d9d9; }
button, input, select { font: inherit; color: inherit; background: none; border: 0; border-radius: 0; }
button { display: inline-flex; align-items: center; justify-content: center; }
svg { display: block; }
.sprite { position: absolute; width: 0; height: 0; }
.app { position: relative; display: flex; flex-direction: column; height: 100vh; overflow: hidden; }

/* title bar */
.titlebar { display: grid; grid-template-columns: 1fr auto 1fr; align-items: center; height: 9px; background: linear-gradient(#cfcfcf, #d6d6d6); }
.quick { display: flex; align-items: center; gap: 3px; padding-left: 2px; }
.quick svg, .sys svg { width: 7px; height: 7px; }
.quick .logo { width: 6px; height: 8px; margin-right: 2px; }
.title { padding-left: 10px; font: 6px/8px "Liberation Mono", "Noto Sans CJK SC", monospace; color: #555; white-space: nowrap; }
.sys { display: flex; justify-content: flex-end; align-items: center; gap: 3px; padding-right: 3px; }
.sys .winbtn svg { width: 5px; height: 5px; }
.winbtn.first { margin-left: 7px; }

/* ribbon tabs */
.tabs { display: flex; height: 9px; padding-left: 11px; gap: 1px; background: linear-gradient(#8f8f8f, #a2a2a2 20%); font-size: 5px; }
.tabs button { padding: 0 7px; color: #0a55ee; font-weight: 700; white-space: nowrap; }
.tabs .on { background: #ececec; color: #333; margin-top: 1px; }
.tabs .pale { color: #e6e6e6; }
.tabs .pill { align-self: center; width: 6px; height: 4px; margin-left: 6px; padding: 0; border: 1px solid #eee; border-radius: 2px; background: #777; }

/* ribbon */
.ribbon { display: flex; height: 40px; background: linear-gradient(#e4e4e4, #989898); border-bottom: 1px solid #777; }
.group { display: flex; flex-direction: column; background: linear-gradient(#f5f5f5, #fff 30%); border-right: 1px solid #ddd; padding-left: 1px; }
.tools { display: flex; flex: 1; }
.tool { flex-direction: column; justify-content: flex-start; min-width: 17px; padding: 2px 2px 0 3px; font-size: 5px; line-height: 7px; white-space: nowrap; color: #333; }
.tool.slim { padding: 2px 2px 0; }
.tool svg { width: 14px; height: 13px; margin-bottom: 1px; }
.tool.off { color: #bbb; }
.more::after { content: ""; margin-top: 4px; border: 2px solid transparent; border-top: 3px solid #1479ee; border-bottom: 0; }
.more.off::after { border-top-color: #aaa; }
.group p { background: #ececec; text-align: center; font-size: 5px; line-height: 7px; color: #222; }
.floor { display: flex; flex-direction: column; gap: 1px; margin-left: auto; padding: 3px 5px 0 2px; border-left: 1px solid #eee; width: 75px; }
.floor-icons { display: flex; gap: 3px; }
.floor-icons svg { width: 13px; height: 13px; }
.floor select { appearance: none; width: 100%; padding: 0 1px; font-size: 5px; line-height: 9px; height: 9px; background: linear-gradient(225deg, #222 50%, transparent 50%) right 3px top 3px / 2px 2px no-repeat, linear-gradient(135deg, #222 50%, transparent 50%) right 1px top 3px / 2px 2px no-repeat, #f4f4f4; color: #666; }

/* work area */
.work { display: flex; flex: 1; min-height: 0; background: #222830; }
.side { display: flex; width: 116px; background: #bdbdbd; padding: 1px 1px 2px 0; }
.rail { display: flex; flex-direction: column; gap: 3px; width: 10px; align-items: center; padding-top: 2px; background: #c8c8c8; }
.rail svg { width: 5px; height: 5px; }
.tree { flex: 1; min-width: 0; background: #fff; border: 1px solid #999; border-top-color: #ddd; }
.tree-tabs { display: flex; gap: 1px; height: 10px; background: #e8e8e8; }
.tree-tabs button { padding: 1px 3px 0; color: #222; }
.tree-tabs .on { background: #fff; }
.tree ul { display: grid; grid-auto-rows: 1fr; height: 29%; padding-left: 1px; list-style: none; line-height: 6px; color: #111; }
.drawing { flex: 1; min-width: 0; height: 100%; font-family: "Liberation Sans", "Noto Sans CJK SC", sans-serif; }
.sheetline { fill: none; stroke: #85888b; }
.sheetline.dim { stroke: #62666b; }
.lv text { font-size: 5px; fill: #13b822; text-anchor: end; }
.tag text { font-size: 5px; fill: #b4b4b4; text-anchor: middle; }
.name { font-size: 9px; fill: #a0a3a6; }
.note { font-size: 6px; fill: #c4c4c4; }
.sections { border-collapse: collapse; font-size: 5px; line-height: 7px; color: #c2c2c2; white-space: nowrap; }
.sections caption { text-align: left; font-size: 6px; line-height: 9px; padding: 0 1px 2px; }
.sections th, .sections td { height: 10px; padding: 1px 1px 0; border: 1px solid #85888b; text-align: left; font-weight: 400; }
.sections .remark { font-size: 4px; padding-right: 3px; }

/* drawing tabs */
.files { display: flex; align-items: center; height: 11px; padding-left: 4px; gap: 7px; background: #c9c9c9; border-top: 1px solid #8e8e8e; }
.files button { gap: 2px; padding: 1px 6px 1px 4px; color: #333; white-space: nowrap; margin-left: -2px; height: 9px; }
.files svg { width: 7px; height: 7px; }
.files .on { background: #fff; padding-right: 12px; }

/* command line and tool bar */
.dock { display: flex; height: 34px; background: #9b9b9b; border-top: 3px solid #6d6d6d; border-bottom: 1px solid #6d6d6d; }
.command { display: flex; flex-direction: column; flex: 0 0 calc(40% - 7px); margin: 0 6px 0 7px; background: #fff; color: #222; font-size: 5px; }
.history { flex: 1; padding-left: 1px; background: linear-gradient(#777, #777) right 3px center / 1px 7px no-repeat; }
.prompt { display: flex; align-items: center; height: 8px; padding-left: 1px; border-top: 1px solid #cfccc0; }
.prompt input { flex: 1; min-width: 0; height: 7px; }
.prompt i { width: 27px; height: 7px; background: linear-gradient(#666, #666) center / 7px 1px no-repeat, #eee; }
.toolbar { display: flex; flex: 1; align-items: flex-start; gap: 2px; padding: 1px 2px; background: #f0f0f0; }
.toolbar svg { width: 14px; height: 14px; }
.toolbar .word { font-size: 7px; line-height: 7px; color: #222; }
.dock-end { width: 4px; background: #f5f5f5; border-left: 1px solid #999; }

/* status bar */
.status { display: flex; align-items: center; height: 10px; padding-left: 5px; background: linear-gradient(#bfbfbf, #dedede); font-size: 5px; color: #222; }
.modes { display: flex; margin-left: 35px; border-left: 1px solid #888; }
.modes button { width: 9px; height: 10px; border-right: 1px solid #999; background: #d0d0d0; }
.modes .on { background: #9dd3e0; }
.modes svg { width: 6px; height: 6px; }

/* task bar */
.taskbar { display: grid; grid-template-columns: 1fr auto 1fr; align-items: center; height: 21px; background: #dcdcdc; font-size: 5px; }
.weather { display: flex; align-items: center; gap: 3px; padding-left: 8px; }
.wicon { position: relative; }
.wicon svg { width: 10px; height: 11px; }
.wicon b { position: absolute; top: -3px; right: -2px; width: 6px; height: 6px; border-radius: 50%; background: #c42b1c; color: #fff; font-size: 5px; line-height: 6px; text-align: center; }
.wtext, .tray time { display: flex; flex-direction: column; color: #444; line-height: 7px; }
.apps { display: flex; align-items: center; gap: 8px; }
.apps svg { width: 11px; height: 11px; }
.apps .start { margin-right: -3px; }
.search { display: flex; align-items: center; gap: 4px; width: 91px; height: 13px; padding: 0 4px; border-radius: 7px; background: #f4f4f4; margin-right: -3px; }
.search svg { width: 7px; height: 7px; }
.search input { flex: 1; min-width: 0; font-size: 6px; }
.search input::placeholder { color: #555; }
.tray { display: flex; justify-content: flex-end; align-items: center; gap: 8px; padding-right: 8px; }
.tray svg { width: 8px; height: 8px; }
.tray .expand { width: 13px; height: 16px; margin-right: -5px; border-radius: 2px; background: #f0f0f0; }
.tray .expand svg { width: 5px; height: 5px; }
.net { display: flex; gap: 2px; }
.tray time { align-items: flex-end; margin-left: -3px; }

/* floating tray and input method bar */
.popup { position: absolute; right: 57px; bottom: 26px; display: grid; grid-template-columns: repeat(5, 1fr); place-items: center; width: 87px; height: 37px; padding: 1px 1px 2px; border-radius: 3px; background: #f7f7f7; box-shadow: 0 0 2px #999; }
.popup svg { width: 7px; height: 7px; }
.ime { position: absolute; right: 0; bottom: 21px; display: flex; align-items: center; justify-content: space-between; width: 97px; height: 11px; padding-right: 3px; background: #fbfbfb; color: #1677d2; }
.ime svg { width: 7px; height: 7px; }
.ime .big { width: 14px; height: 14px; }
.ime b { font-size: 7px; line-height: 8px; }
```
